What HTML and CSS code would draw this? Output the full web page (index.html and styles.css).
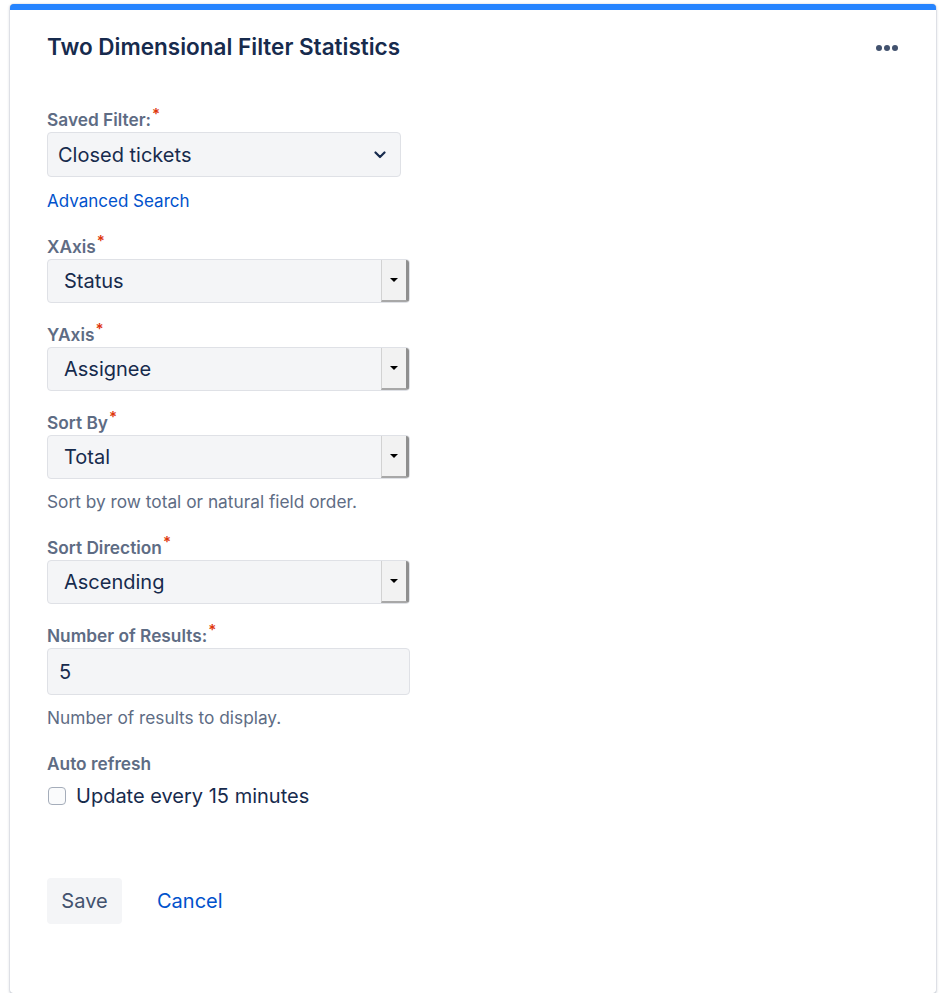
FILE: index.html
```html
<!DOCTYPE html>
<html>
<head>
<meta charset="utf-8">
<link rel="stylesheet" href="styles.css">
</head>
<body>
<div class="card">
  <div class="header">
    <h1 class="title">Two Dimensional Filter Statistics</h1>
    <div class="more"><span></span><span></span><span></span></div>
  </div>
  <form class="form">
    <div class="field">
      <label class="label">Saved Filter:<span class="req">*</span></label>
      <div class="select select-modern">
        <span class="value">Closed tickets</span>
        <svg class="chev" width="12" height="8" viewBox="0 0 12 8"><path d="M1.5 1.5 L6 6 L10.5 1.5" fill="none" stroke="#172B4D" stroke-width="2.2" stroke-linecap="round" stroke-linejoin="round"/></svg>
      </div>
      <a class="link" href="#">Advanced Search</a>
    </div>
    <div class="field">
      <label class="label">XAxis<span class="req">*</span></label>
      <div class="select select-legacy"><span class="value">Status</span><span class="btn"><i></i></span></div>
    </div>
    <div class="field">
      <label class="label">YAxis<span class="req">*</span></label>
      <div class="select select-legacy"><span class="value">Assignee</span><span class="btn"><i></i></span></div>
    </div>
    <div class="field">
      <label class="label">Sort By<span class="req">*</span></label>
      <div class="select select-legacy"><span class="value">Total</span><span class="btn"><i></i></span></div>
      <div class="help">Sort by row total or natural field order.</div>
    </div>
    <div class="field">
      <label class="label">Sort Direction<span class="req">*</span></label>
      <div class="select select-legacy"><span class="value">Ascending</span><span class="btn"><i></i></span></div>
    </div>
    <div class="field">
      <label class="label">Number of Results:<span class="req">*</span></label>
      <div class="input"><span class="value">5</span></div>
      <div class="help">Number of results to display.</div>
    </div>
    <div class="field">
      <label class="label">Auto refresh</label>
      <div class="check"><span class="box"></span><span class="check-label">Update every 15 minutes</span></div>
    </div>
    <div class="actions">
      <button type="button" class="save">Save</button>
      <a class="cancel" href="#">Cancel</a>
    </div>
  </form>
</div>
</body>
</html>
```
FILE: styles.css
```css
* { box-sizing: border-box; }
body {
  margin: 0;
  background: #fff;
  font-family: Inter, "Liberation Sans", Arial, sans-serif;
  color: #172B4D;
}
.card {
  margin: 4px 4px 0 10px;
  width: 926px;
  height: 989px;
  border-top: 6px solid #2684FF;
  border-radius: 4px 4px 3px 3px;
  background: #fff;
  box-shadow: 0 1px 3px rgba(9, 30, 66, 0.3), 0 0 1px rgba(9, 30, 66, 0.3);
}
.header {
  display: flex;
  align-items: center;
  justify-content: space-between;
  padding: 22px 38px 0 37px;
}
.title {
  margin: 0;
  font-size: 22.5px;
  font-weight: 600;
  color: #172B4D;
  line-height: 30px;
}
.more { display: flex; gap: 2px; margin-top: 2px; }
.more span {
  width: 6px; height: 6px; border-radius: 50%;
  background: #42526E;
}
.form {
  padding: 48px 0 0 37px;
  width: 400px;
}
.field {
  display: flex;
  flex-direction: column;
  align-items: flex-start;
  margin-bottom: 22px;
}
.label {
  font-size: 17.3px;
  font-weight: 600;
  color: #5E6C84;
  line-height: 20px;
  margin-bottom: 2px;
}
.req { color: #DE350B; font-size: 15px; line-height: 0; vertical-align: 7px; margin-left: 1px; }
.select {
  display: flex;
  align-items: center;
  background: #F4F5F7;
  border: 1px solid #DFE1E6;
  border-radius: 4px;
  font-size: 20px;
  color: #172B4D;
}
.select-modern {
  width: 354px;
  height: 45px;
  padding: 0 14px 0 10px;
  justify-content: space-between;
}
.select-legacy {
  width: 363px;
  height: 44px;
  padding-left: 16px;
  justify-content: space-between;
  overflow: hidden;
}
.select-legacy .btn {
  width: 28px;
  height: 100%;
  background: #F2F2F2;
  border-left: 1px solid #D2D2D2;
  border-right: 3px solid #8F8F8F;
  border-bottom: 2px solid #A8A8A8;
  display: flex;
  align-items: center;
  justify-content: center;
}
.select-legacy .btn i {
  width: 0; height: 0;
  border-left: 4px solid transparent;
  border-right: 4px solid transparent;
  border-top: 4px solid #000;
}
.link {
  margin-top: 14px;
  margin-bottom: 4px;
  font-size: 17px;
  color: #0052CC;
  text-decoration: none;
  line-height: 20px;
}
.input {
  width: 363px;
  height: 47px;
  background: #F4F5F7;
  border: 1px solid #DFE1E6;
  border-radius: 4px;
  display: flex;
  align-items: center;
  padding-left: 11px;
  font-size: 20px;
}
.help {
  margin-top: 13px;
  margin-bottom: 4px;
  font-size: 17.3px;
  color: #5E6C84;
  line-height: 20px;
}
.check {
  display: flex;
  align-items: center;
  gap: 10px;
  margin-top: 8px;
}
.box {
  width: 18px; height: 18px;
  border: 1px solid #A5ADBA;
  border-radius: 4px;
  background: #FAFBFC;
  margin-left: 1px;
}
.check-label { font-size: 20px; color: #172B4D; }
.actions {
  display: flex;
  align-items: center;
  gap: 35px;
  margin-top: 70px;
}
.save {
  width: 75px;
  height: 46px;
  border: none;
  border-radius: 4px;
  background: #F4F5F7;
  color: #42526E;
  font-family: inherit;
  font-size: 20px;
  padding: 0;
}
.cancel {
  color: #0052CC;
  font-size: 20px;
  text-decoration: none;
}
```
